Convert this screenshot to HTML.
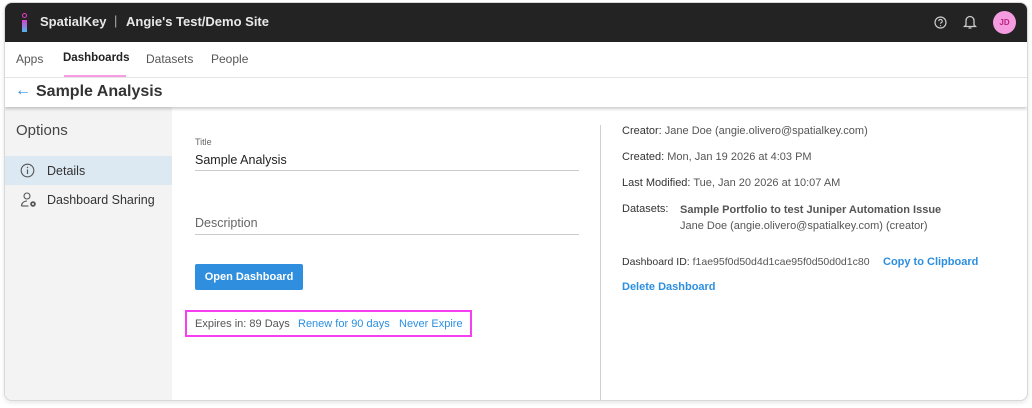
<!DOCTYPE html>
<html><head><style>
*{margin:0;padding:0;box-sizing:border-box}
body{width:1032px;height:408px;background:#fff;font-family:"Liberation Sans",sans-serif;position:relative;overflow:hidden}
.win{position:absolute;left:4px;top:2px;width:1024px;height:399px;border-radius:8px;overflow:hidden;border:1px solid #d8d8d8;background:#fff;box-shadow:0 2px 4px rgba(0,0,0,.1)}
.hdr{position:absolute;left:0;top:0;width:100%;height:39px;background:#232323;color:#e8e8e8;font-weight:bold;font-size:13px}
.abs{position:absolute;white-space:nowrap}
.tabs{position:absolute;top:39px;left:0;width:100%;height:36px;border-bottom:1px solid #e6e6e6;font-size:12px;color:#555}
.tbar{position:absolute;top:75px;left:0;width:100%;height:29px;background:#fff;box-shadow:0 2px 3px rgba(0,0,0,.2);z-index:2}
.side{position:absolute;left:0;top:104px;width:167px;height:300px;background:#f3f3f3}
.c{font-size:11px;color:#555}
.blue{color:#2b8fe0}
</style></head><body>
<div class="win">
 <div class="hdr">
  <div class="abs" style="left:17px;top:10px;width:5px;height:5px;border:1px solid #e63ec8;border-radius:50%"></div>
  <div class="abs" style="left:17px;top:17px;width:5px;height:12px;background:linear-gradient(#d73fd0,#4fb8e8)"></div>
  <div class="abs" style="left:35px;top:11px">SpatialKey</div>
  <div class="abs" style="left:109px;top:10px;font-weight:normal;color:#aaa">|</div>
  <div class="abs" style="left:121px;top:11px">Angie's Test/Demo Site</div>
  <svg class="abs" style="left:929px;top:13px" width="13" height="13" viewBox="0 0 13 13"><circle cx="6.5" cy="6.5" r="5.5" fill="none" stroke="#ccc" stroke-width="1.2"/><path d="M4.8 5.2a1.7 1.7 0 1 1 2.4 1.5c-.5.3-.7.6-.7 1.1" fill="none" stroke="#ccc" stroke-width="1.1"/><circle cx="6.5" cy="9.6" r=".6" fill="#ccc"/></svg>
  <svg class="abs" style="left:958px;top:11px" width="14" height="16" viewBox="0 0 14 16"><path d="M3 11V6.5a4 4 0 0 1 8 0V11l1.5 1.5h-11Z" fill="none" stroke="#ccc" stroke-width="1.3"/><path d="M5.5 14h3" stroke="#ccc" stroke-width="1.3"/></svg>
  <div class="abs" style="left:988px;top:8px;width:23px;height:23px;border-radius:50%;background:#f59ce0;color:#c0207e;font-size:8px;font-weight:bold;text-align:center;line-height:23px">JD</div>
 </div>
 <div class="tabs">
  <div class="abs" style="left:11px;top:10px">Apps</div>
  <div class="abs" style="left:58px;top:10px;color:#222;font-weight:bold;font-size:11.5px">Dashboards</div>
  <div class="abs" style="left:59px;top:33px;width:62px;height:2px;background:#f79ce2"></div>
  <div class="abs" style="left:141px;top:10px">Datasets</div>
  <div class="abs" style="left:206px;top:10px">People</div>
 </div>
 <div class="tbar">
  <div class="abs" style="left:10px;top:4px;font-size:16px;color:#2b8fe0">←</div>
  <div class="abs" style="left:31px;top:5px;font-size:16px;font-weight:bold;color:#333">Sample Analysis</div>
 </div>
 <div class="side">
  <div class="abs" style="left:11px;top:15px;font-size:15px;color:#444">Options</div>
  <div class="abs" style="left:0;top:49px;width:167px;height:29px;background:#dce8f2"></div>
  <svg class="abs" style="left:15px;top:56px" width="15" height="15" viewBox="0 0 15 15"><circle cx="7.5" cy="7.5" r="6.3" fill="none" stroke="#555" stroke-width="1.1"/><path d="M7.5 6.5v4.5" stroke="#555" stroke-width="1.2"/><circle cx="7.5" cy="4.5" r=".7" fill="#555"/></svg>
  <div class="abs" style="left:42px;top:57px;font-size:12.5px;color:#333">Details</div>
  <svg class="abs" style="left:15px;top:85px" width="18" height="16" viewBox="0 0 18 16"><circle cx="7" cy="4" r="3" fill="none" stroke="#555" stroke-width="1.1"/><path d="M1.5 14c0-3 2.5-5 5.5-5" fill="none" stroke="#555" stroke-width="1.1"/><path d="M1.5 14h7" stroke="#555" stroke-width="1.1"/><circle cx="13" cy="12" r="2.8" fill="#555"/><circle cx="13" cy="12" r="1" fill="#f3f3f3"/></svg>
  <div class="abs" style="left:42px;top:86px;font-size:12.5px;color:#333">Dashboard Sharing</div>
 </div>
 <div class="abs c" style="left:190px;top:134px;font-size:9px;color:#666">Title</div>
 <div class="abs" style="left:190px;top:150px;font-size:12.5px;color:#222">Sample Analysis</div>
 <div class="abs" style="left:190px;top:167px;width:384px;height:1px;background:#ccc"></div>
 <div class="abs" style="left:190px;top:213px;font-size:12.5px;color:#666">Description</div>
 <div class="abs" style="left:190px;top:231px;width:384px;height:1px;background:#ccc"></div>
 <div class="abs" style="left:190px;top:261px;width:108px;height:26px;background:#2f8fde;border-radius:2px;color:#fff;font-size:11px;font-weight:bold;text-align:center;line-height:26px">Open Dashboard</div>
 <div class="abs" style="left:180px;top:307px;width:287px;height:27px;border:2px solid #f53ff0"></div>
 <div class="abs c" style="left:190px;top:315px">Expires in: 89 Days</div>
 <div class="abs c blue" style="left:293px;top:315px">Renew for 90 days</div>
 <div class="abs c blue" style="left:394px;top:315px">Never Expire</div>
 <div class="abs" style="left:595px;top:122px;width:1px;height:280px;background:#d0d0d0"></div>
 <div class="abs c" style="left:617px;top:122px"><span style="color:#333">Creator:</span> Jane Doe (angie.olivero@spatialkey.com)</div>
 <div class="abs c" style="left:617px;top:148px"><span style="color:#333">Created:</span> Mon, Jan 19 2026 at 4:03 PM</div>
 <div class="abs c" style="left:617px;top:174px"><span style="color:#333">Last Modified:</span> Tue, Jan 20 2026 at 10:07 AM</div>
 <div class="abs c" style="left:617px;top:200px;color:#333">Datasets:</div>
 <div class="abs c" style="left:675px;top:201px;font-weight:bold">Sample Portfolio to test Juniper Automation Issue</div>
 <div class="abs c" style="left:675px;top:217px">Jane Doe (angie.olivero@spatialkey.com) (creator)</div>
 <div class="abs c" style="left:617px;top:253px;font-size:10.5px"><span style="color:#333">Dashboard ID:</span> f1ae95f0d50d4d1cae95f0d50d0d1c80</div>
 <div class="abs c blue" style="left:878px;top:253px;font-weight:bold">Copy to Clipboard</div>
 <div class="abs c blue" style="left:617px;top:278px;font-weight:bold">Delete Dashboard</div>
</div>
</body></html>
